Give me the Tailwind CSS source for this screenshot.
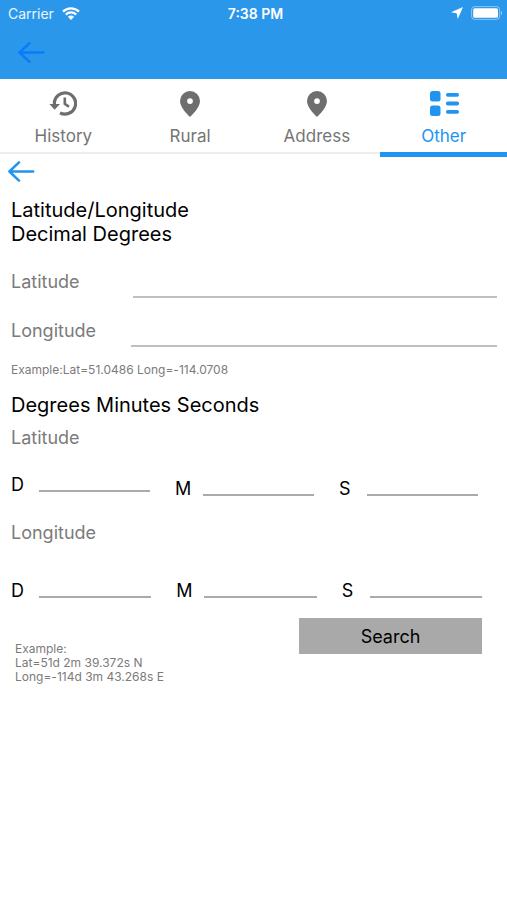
<!DOCTYPE html>
<html lang="en">

<head>
    <meta charset="UTF-8">
    <meta name="viewport" content="width=device-width, initial-scale=1.0">
    <script src="https://cdn.jsdelivr.net/npm/@tailwindcss/browser@4"></script>
    <title>Search - Other</title>
</head>

<body class="bg-white font-['Inter',sans-serif] text-black">
    <header class="bg-[#2b97eb] text-white h-[79px]">
        <div class="grid grid-cols-3 items-center h-[26px] px-2 text-[14px]">
            <div class="flex items-center gap-2 text-white/90">
                <span>Carrier</span>
                <svg class="w-[18px] h-[13px]" viewBox="0 0 18 13" fill="none" stroke="#fff" stroke-width="2.2">
                    <path d="M1 4.6a11.4 11.4 0 0 1 16 0M3.8 7.6a7.4 7.4 0 0 1 10.4 0" />
                    <path d="M9 13 5.9 9.8a4.4 4.4 0 0 1 6.2 0Z" fill="#fff" stroke="none" />
                </svg>
            </div>
            <span class="ml-1 text-center font-semibold">7:38 PM</span>
            <div class="flex items-center justify-end gap-2 -mr-1">
                <svg class="w-3 h-3" viewBox="0 0 11 11" fill="#fff">
                    <path d="M11 0 6.2 11 5.2 5.8 0 4.8Z" />
                </svg>
                <svg class="w-8 h-[14px]" viewBox="0 0 32 14" fill="none">
                    <rect x=".6" y=".6" width="28" height="12.8" rx="3" stroke="#fff" stroke-opacity=".45" />
                    <rect x="2.2" y="2.2" width="24.8" height="9.6" rx="1.6" fill="#fff" />
                    <path d="M30 5v4c1.6-.6 1.6-3.4 0-4Z" fill="#fff" fill-opacity=".5" />
                </svg>
            </div>
        </div>
        <button type="button" aria-label="Back" class="block ml-[18px] mt-4">
            <svg class="w-[27px] h-[21px]" viewBox="0 0 27 21" fill="none" stroke="#0a7cfb" stroke-width="2.5"
                stroke-linecap="round" stroke-linejoin="round">
                <path d="M11.5 1.2 1.5 10.5l10 9.3M1.5 10.5H25.5" />
            </svg>
        </button>
    </header>

    <nav class="grid grid-cols-4 h-[75px] border-b-2 border-[#ededed] text-[17px] leading-6 text-[#757575]">
        <a href="#history" class="flex flex-col items-center pt-3 gap-[7px]">
            <svg class="w-7 h-[26px]" viewBox="0 0 28 26" fill="none" stroke="#6e6e6e" stroke-width="3.2">
                <path d="M5.4 14V12.3A10.6 10.6 0 1 1 11 21.8" />
                <path d="M.4 13H11L5.6 18.8Z" fill="#6e6e6e" stroke="none" />
                <path d="M15.8 6.5v6.3l4.2 3" stroke-width="2.6" />
            </svg>
            History
        </a>
        <a href="#rural" class="flex flex-col items-center pt-3 gap-[7px]">
            <svg class="w-5 h-[26px]" viewBox="0 0 20 26" fill="#6e6e6e">
                <path fill-rule="evenodd"
                    d="M10 0a10 10 0 0 0-10 10c0 7 10 16 10 16s10-9 10-16A10 10 0 0 0 10 0Zm0 7.2a2.9 2.9 0 1 1 0 5.8 2.9 2.9 0 0 1 0-5.8Z" />
            </svg>
            Rural
        </a>
        <a href="#address" class="flex flex-col items-center pt-3 gap-[7px]">
            <svg class="w-5 h-[26px]" viewBox="0 0 20 26" fill="#6e6e6e">
                <path fill-rule="evenodd"
                    d="M10 0a10 10 0 0 0-10 10c0 7 10 16 10 16s10-9 10-16A10 10 0 0 0 10 0Zm0 7.2a2.9 2.9 0 1 1 0 5.8 2.9 2.9 0 0 1 0-5.8Z" />
            </svg>
            Address
        </a>
        <a href="#other" class="flex flex-col items-center h-[78px] pt-3 gap-[7px] text-[#2094ee] border-b-5 border-[#2094ee]">
            <svg class="w-[30px] h-[26px]" viewBox="0 0 30 26" fill="#2094ee">
                <rect x="1" y="0" width="10.5" height="10.5" rx="2.5" />
                <rect x="1" y="14.5" width="10.5" height="10.5" rx="2.5" />
                <rect x="17" y="2" width="13" height="3.8" rx="1.7" />
                <rect x="17" y="10.6" width="13" height="3.8" rx="1.7" />
                <rect x="17" y="19" width="13" height="3.8" rx="1.7" />
            </svg>
            Other
        </a>
    </nav>

    <main class="px-[11px] pt-[7px]">
        <button type="button" aria-label="Back" class="block -ml-[3px]">
            <svg class="w-[27px] h-[21px]" viewBox="0 0 27 21" fill="none" stroke="#2094ee" stroke-width="2.5"
                stroke-linecap="round" stroke-linejoin="round">
                <path d="M11 1.4 1.4 10.5l9.6 9.1M1.4 10.5H25.2" />
            </svg>
        </button>

        <form onsubmit="event.preventDefault()">
            <h2 class="mt-4 text-[20px] leading-6">Latitude/Longitude<br>Decimal Degrees</h2>
            <div class="flex mt-6 h-7 text-[18px] leading-6">
                <label for="lat" class="w-[122px] text-[#7b7b7b]">Latitude</label>
                <input id="lat" type="text" class="flex-1 min-w-0 border-b-2 border-[#c0c0c0] outline-none -mr-px">
            </div>
            <div class="flex mt-[21px] h-7 text-[18px] leading-6">
                <label for="long" class="w-[120px] text-[#7b7b7b]">Longitude</label>
                <input id="long" type="text" class="flex-1 min-w-0 border-b-2 border-[#c0c0c0] outline-none -mr-px">
            </div>
            <p class="mt-4 text-[12px] leading-[14px] text-[#7b7b7b]">Example:Lat=51.0486 Long=-114.0708</p>

            <h2 class="mt-4 text-[20px] leading-6">Degrees Minutes Seconds</h2>
            <fieldset class="min-w-0 mt-[9px]">
                <legend class="text-[18px] leading-6 text-[#7b7b7b]">Latitude</legend>
                <div class="flex gap-[25px] pt-[22px] mr-[18px] text-[18px] leading-[26px]">
                    <div class="flex flex-1 min-w-0">
                        <label for="latD" class="w-7">D</label>
                        <input id="latD" type="text" class="flex-1 min-w-0 h-5 border-b-2 border-[#aaa] outline-none">
                    </div>
                    <div class="flex flex-1 min-w-0 mt-1">
                        <label for="latM" class="w-7">M</label>
                        <input id="latM" type="text" class="flex-1 min-w-0 h-5 border-b-2 border-[#aaa] outline-none">
                    </div>
                    <div class="flex flex-1 min-w-0 mt-1">
                        <label for="latS" class="w-7">S</label>
                        <input id="latS" type="text" class="flex-1 min-w-0 h-5 border-b-2 border-[#aaa] outline-none">
                    </div>
                </div>
            </fieldset>
            <fieldset class="min-w-0 mt-[19px]">
                <legend class="text-[18px] leading-6 text-[#7b7b7b]">Longitude</legend>
                <div class="flex gap-[25px] pt-[33px] mr-[14px] text-[18px] leading-[26px]">
                    <div class="flex flex-1 min-w-0">
                        <label for="longD" class="w-7">D</label>
                        <input id="longD" type="text" class="flex-1 min-w-0 h-5 border-b-2 border-[#aaa] outline-none">
                    </div>
                    <div class="flex flex-1 min-w-0">
                        <label for="longM" class="w-7">M</label>
                        <input id="longM" type="text" class="flex-1 min-w-0 h-5 border-b-2 border-[#aaa] outline-none">
                    </div>
                    <div class="flex flex-1 min-w-0">
                        <label for="longS" class="w-7">S</label>
                        <input id="longS" type="text" class="flex-1 min-w-0 h-5 border-b-2 border-[#aaa] outline-none">
                    </div>
                </div>
            </fieldset>

            <div class="flex justify-between items-start mt-[14px] ml-1 mr-[14px]">
                <p class="mt-6 text-[12px] leading-[14px] text-[#7b7b7b]">
                    Example:<br>
                    Lat=51d 2m 39.372s N<br>
                    Long=-114d 3m 43.268s E
                </p>
                <button type="submit" class="w-[183px] h-9 bg-[#a9a9a9] text-[18px]">Search</button>
            </div>
        </form>
    </main>
</body>

</html>
